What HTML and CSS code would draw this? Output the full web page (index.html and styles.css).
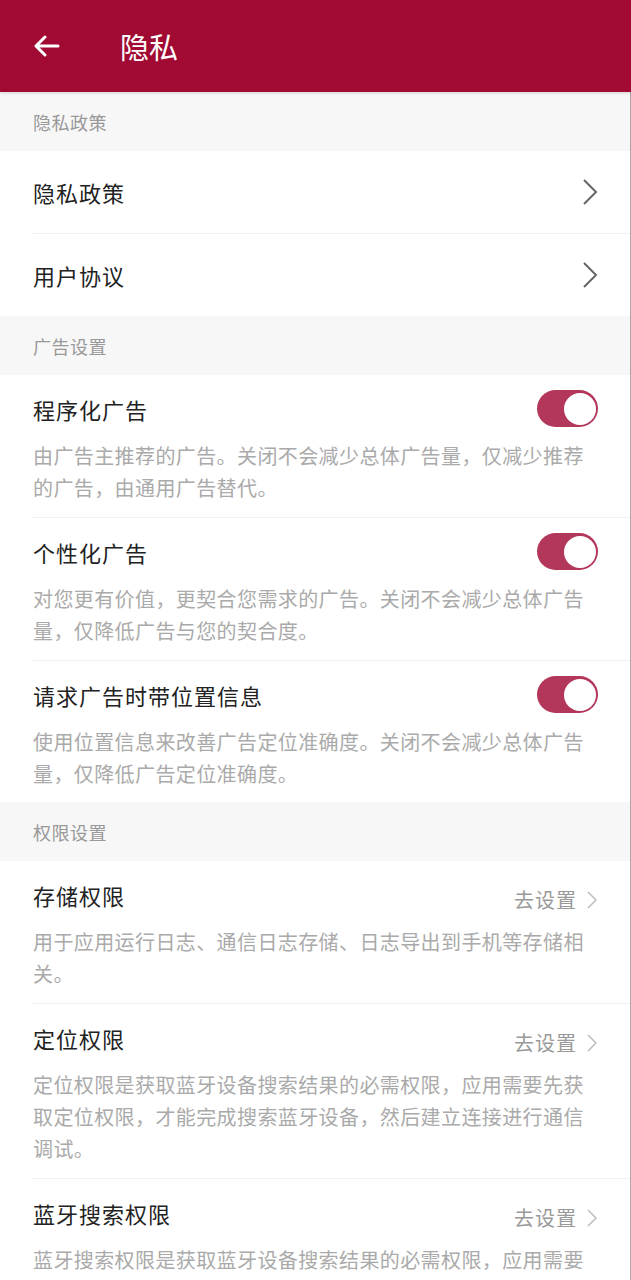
FILE: index.html
```html
<!DOCTYPE html>
<html lang="zh-CN">
<head>
<meta charset="utf-8">
<title>隐私</title>
<link rel="stylesheet" href="styles.css">
</head>
<body>
<div class="app">
  <header class="topbar">
    <svg class="back" width="28" height="24" viewBox="0 0 28 24"><path d="M26 12H4M13 3L4 12l9 9" fill="none" stroke="#fff" stroke-width="3" stroke-linecap="round" stroke-linejoin="round"/></svg>
    <h1 class="title">隐私</h1>
  </header>
  <main class="content">
    <div class="section-head">隐私政策</div>
    <div class="group">
      <div class="link-row"><span class="row-title">隐私政策</span><svg class="chev" width="16" height="26" viewBox="0 0 16 26"><path d="M2 1l12 12L2 25" fill="none" stroke="#666" stroke-width="2"/></svg></div>
      <div class="link-row"><span class="row-title">用户协议</span><svg class="chev" width="16" height="26" viewBox="0 0 16 26"><path d="M2 1l12 12L2 25" fill="none" stroke="#666" stroke-width="2"/></svg></div>
    </div>
    <div class="section-head">广告设置</div>
    <div class="group">
      <div class="item">
        <div class="item-head"><span class="row-title">程序化广告</span><span class="switch"><span class="knob"></span></span></div>
        <p class="desc">由广告主推荐的广告。关闭不会减少总体广告量，仅减少推荐的广告，由通用广告替代。</p>
      </div>
      <div class="item">
        <div class="item-head"><span class="row-title">个性化广告</span><span class="switch"><span class="knob"></span></span></div>
        <p class="desc">对您更有价值，更契合您需求的广告。关闭不会减少总体广告量，仅降低广告与您的契合度。</p>
      </div>
      <div class="item">
        <div class="item-head"><span class="row-title">请求广告时带位置信息</span><span class="switch"><span class="knob"></span></span></div>
        <p class="desc">使用位置信息来改善广告定位准确度。关闭不会减少总体广告量，仅降低广告定位准确度。</p>
      </div>
    </div>
    <div class="section-head">权限设置</div>
    <div class="group">
      <div class="item">
        <div class="item-head"><span class="row-title">存储权限</span><span class="goset">去设置<svg class="chev-s" width="10" height="18" viewBox="0 0 10 18"><path d="M1 1l8 8-8 8" fill="none" stroke="#bbb" stroke-width="1.5"/></svg></span></div>
        <p class="desc">用于应用运行日志、通信日志存储、日志导出到手机等存储相关。</p>
      </div>
      <div class="item">
        <div class="item-head"><span class="row-title">定位权限</span><span class="goset">去设置<svg class="chev-s" width="10" height="18" viewBox="0 0 10 18"><path d="M1 1l8 8-8 8" fill="none" stroke="#bbb" stroke-width="1.5"/></svg></span></div>
        <p class="desc">定位权限是获取蓝牙设备搜索结果的必需权限，应用需要先获取定位权限，才能完成搜索蓝牙设备，然后建立连接进行通信调试。</p>
      </div>
      <div class="item">
        <div class="item-head"><span class="row-title">蓝牙搜索权限</span><span class="goset">去设置<svg class="chev-s" width="10" height="18" viewBox="0 0 10 18"><path d="M1 1l8 8-8 8" fill="none" stroke="#bbb" stroke-width="1.5"/></svg></span></div>
        <p class="desc">蓝牙搜索权限是获取蓝牙设备搜索结果的必需权限，应用需要先获取蓝牙搜索权限，才能完成搜索蓝牙设备，然后建立连接进行通信调试。</p>
      </div>
    </div>
  </main>
</div>
</body>
</html>
```
FILE: styles.css
```css
* { box-sizing: border-box; }
html, body { margin: 0; padding: 0; }
body {
  width: 631px;
  height: 1280px;
  overflow: hidden;
  background: #fff;
  font-family: "Noto Sans CJK SC", "Noto Sans", sans-serif;
}
.app { width: 631px; height: 1280px; overflow: hidden; }
.topbar {
  height: 92px;
  background: #a00a33;
  display: flex;
  align-items: center;
  padding-left: 32px;
  position: relative;
  z-index: 1;
  box-shadow: 0 1px 3px rgba(0,0,0,0.15);
}
.back { display: block; }
.title {
  margin: 0 0 0 60px;
  font-size: 29px;
  font-weight: 400;
  color: #fff;
  line-height: 40px;
}
.content {
  border-right: 1px solid #a8a8a8;
}
.section-head {
  height: 59px;
  background: #f7f7f7;
  color: #999;
  font-size: 18px;
  display: flex;
  align-items: center;
  padding-left: 33px;
  letter-spacing: 0.5px;
}
.group { background: #fff; }
.row-title {
  font-size: 22px;
  color: #222;
  line-height: 30px;
  letter-spacing: 1px;
}
.link-row {
  height: 83px;
  margin-left: 33px;
  padding-right: 32px;
  display: flex;
  align-items: center;
  justify-content: space-between;
  border-bottom: 1px solid #f0f0f0;
}
.link-row:last-child { border-bottom: none; height: 82px; }
.chev { display: block; }
.item {
  margin-left: 33px;
  padding: 15px 32px 13px 0;
  border-bottom: 1px solid #f0f0f0;
}
.item:last-child { border-bottom: none; padding-bottom: 12px; }
.item-head {
  height: 37px;
  display: flex;
  justify-content: space-between;
  align-items: center;
}
.switch {
  width: 61px;
  height: 37px;
  border-radius: 19px;
  background: #b3375a;
  display: flex;
  align-items: center;
  justify-content: flex-end;
  padding-right: 2px;
}
.knob {
  width: 32px;
  height: 32px;
  border-radius: 50%;
  background: #fff;
}
.goset {
  align-self: flex-end;
  display: flex;
  align-items: center;
  gap: 10px;
  font-size: 20px;
  line-height: 26px;
  color: #999;
  letter-spacing: 1px;
  margin-right: 1px;
}
.chev-s { display: block; }
.desc {
  margin: 13px 0 0;
  font-size: 20px;
  line-height: 32px;
  color: #aaa;
  letter-spacing: 0.4px;
}
```
